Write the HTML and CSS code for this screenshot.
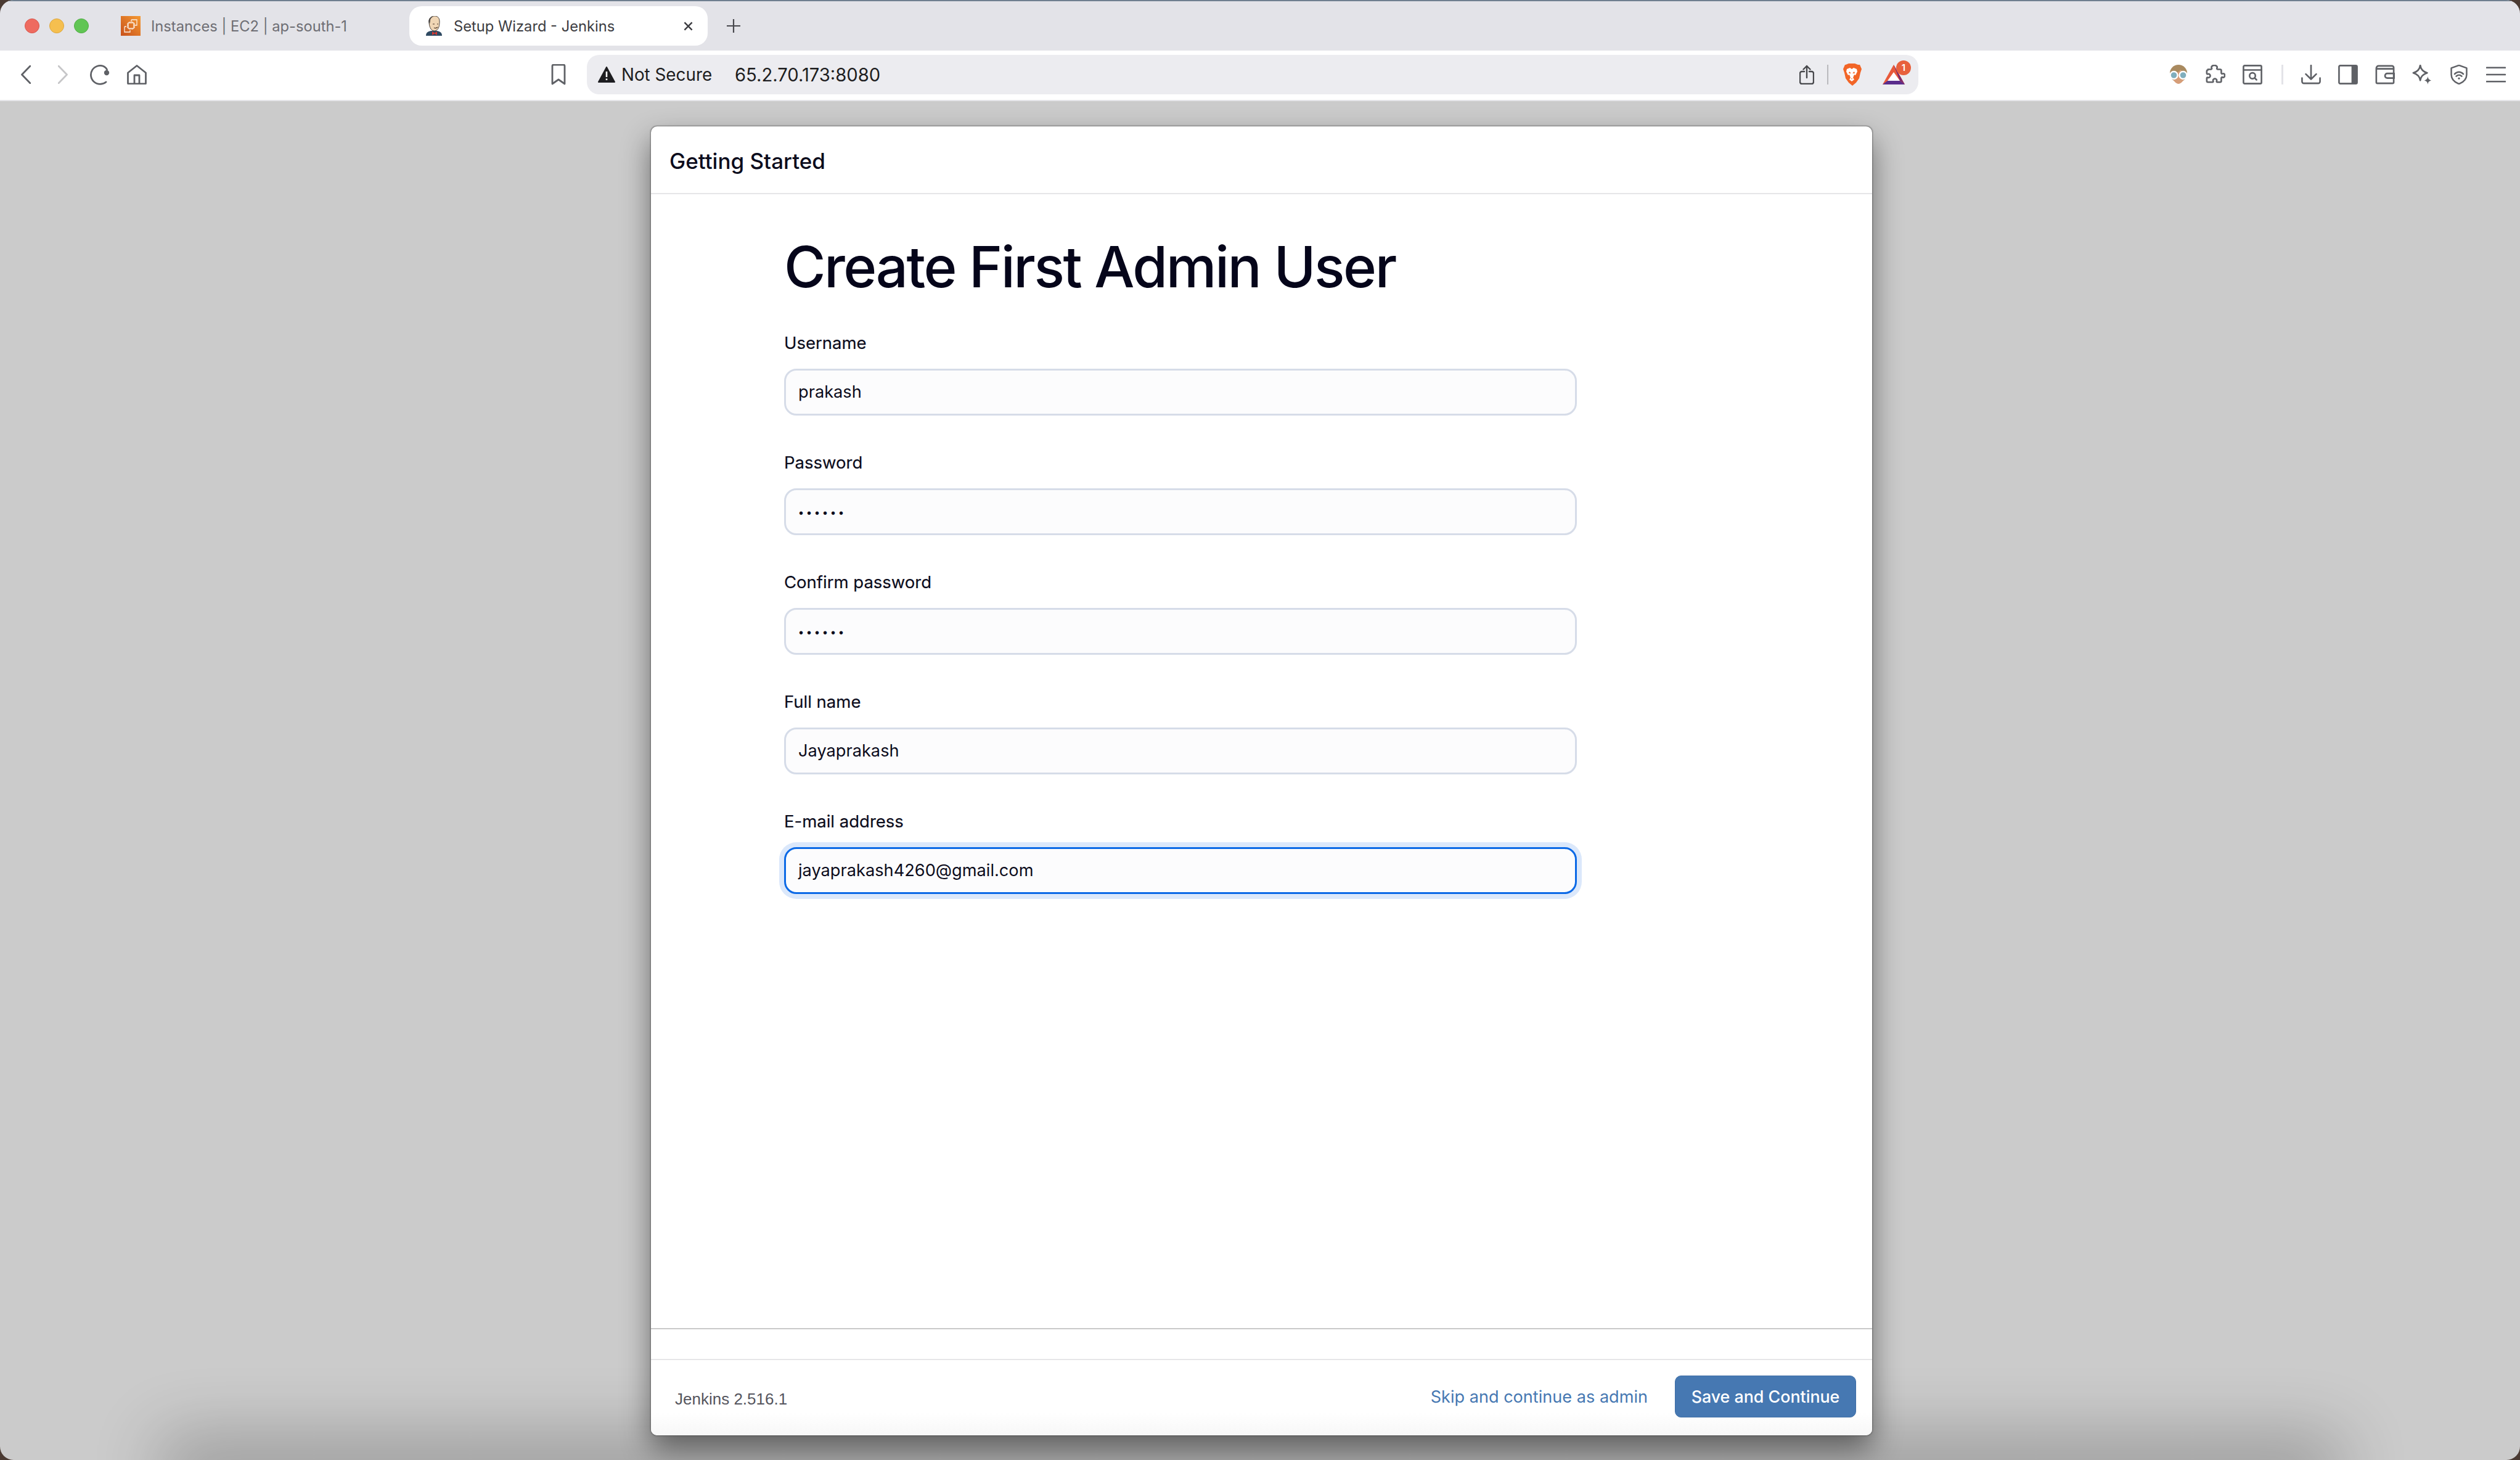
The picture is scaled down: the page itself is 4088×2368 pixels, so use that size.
FILE: index.html
```html
<!DOCTYPE html>
<html lang="en">
<head>
<meta charset="utf-8">
<title>Setup Wizard - Jenkins</title>
<link rel="stylesheet" href="styles.css">
</head>
<body>
<div class="window">
  <header class="tabstrip">
    <div class="lights">
      <span class="light red"></span><span class="light yellow"></span><span class="light green"></span>
    </div>
    <div class="tab">
      <svg class="favicon" viewBox="0 0 32 32">
        <defs><linearGradient id="aws" x1="0" y1="1" x2="1" y2="0"><stop offset="0" stop-color="#c8511b"/><stop offset="1" stop-color="#f59a32"/></linearGradient></defs>
        <rect width="32" height="32" fill="url(#aws)"/>
        <g fill="none" stroke="#fbeee2" stroke-width="1.3">
          <path d="M6 17v9h9v-3M6 17h3M17 6h9v9h-3M17 6v3"/>
          <rect x="12" y="11" width="9" height="9"/>
          <path d="M14 9v2M16.500 9v2M19 9v2M14 20v2M16.500 20v2M19 20v2M10 13h2M10 15.500h2M10 18h2M21 13h2M21 15.500h2M21 18h2"/>
        </g>
      </svg>
      <span class="tab-title">Instances | EC2 | ap-south-1</span>
    </div>
    <div class="tab active">
      <svg class="favicon jenkins" viewBox="0 0 28 32">
        <path d="M1 32c0-5 3-7 8-8h10c5 1 8 3 8 8z" fill="#2f4a62"/>
        <path d="M6 9c0-6 4-9 9-9s8 3 8 9c0 6-1 12-5 14-3 2-7 1-9-2-2-3-3-7-3-12z" fill="#f0d6b5" stroke="#4a3f38" stroke-width="1"/>
        <path d="M6 12C4 6 7 1 13 1c-4 2-5 4-5 7l-1 5z" fill="#4d4a48"/>
        <path d="M12 13h3M19 13h2M14 19c2 1 4 1 6-1" fill="none" stroke="#4a3526" stroke-width="1.200"/>
        <path d="M11 25l4 2.500 4-2.500v6l-4-2.500-4 2.500z" fill="#d33833"/>
      </svg>
      <span class="tab-title">Setup Wizard - Jenkins</span>
      <svg class="close" viewBox="0 0 16 16"><path d="M1.500 1.500l13 13M14.500 1.500l-13 13"/></svg>
    </div>
    <svg class="new-tab" viewBox="0 0 22 22"><path d="M11 0v22M0 11h22"/></svg>
  </header>

  <nav class="toolbar">
    <div class="nav-buttons">
      <svg class="icon back" viewBox="0 0 16 30"><path d="M15 1L1.500 15 15 29"/></svg>
      <svg class="icon forward" viewBox="0 0 16 30"><path d="M1 1l13.500 14L1 29"/></svg>
      <svg class="icon reload" viewBox="0 0 34 34"><path d="M28 29A15 15 0 1 1 24 3.500c2.500 1.200 4.500 3 5.500 5.500"/><circle class="solid" cx="29" cy="14" r="4.200"/></svg>
      <svg class="icon home" viewBox="0 0 32 32"><path d="M1.500 13L16 1.500 30.500 13v17a1 1 0 0 1-1 1h-27a1 1 0 0 1-1-1zM12 31V17h8v14"/></svg>
    </div>
    <svg class="icon bookmark" viewBox="0 0 24 34"><path d="M2 3a2 2 0 0 1 2-2h16a2 2 0 0 1 2 2v29l-10-7-10 7z"/></svg>
    <div class="address">
      <svg class="warn" viewBox="0 0 28 26"><path d="M14 1L1 25h26z" fill="#1d1d20" stroke="#1d1d20" stroke-width="2" stroke-linejoin="round"/><path d="M14 8v9M14 19.500v2.500" stroke="#fff" stroke-width="2.600"/></svg>
      <span class="not-secure">Not Secure</span>
      <span class="url">65.2.70.173:8080</span>
      <svg class="icon share" viewBox="0 0 24 32"><path d="M8 11H4a3 3 0 0 0-3 3v14a3 3 0 0 0 3 3h16a3 3 0 0 0 3-3V14a3 3 0 0 0-3-3h-4M12 21V2M6.500 7.500L12 2l5.500 5.500"/></svg>
      <span class="addr-sep"></span>
      <svg class="lion" viewBox="0 0 32 36">
        <path d="M6 2L11 0h10l5 2 3 0 3 7-2 6-2 9-5 7-6 5-6-5-5-7-2-9-2-6 3-7z" fill="#f26527"/>
        <path d="M8 9l5-2 3 2 3-2 5 2 1 4-3 6-2-1-2 5 2 3-4 3-4-3 2-3-2-5-2 1-3-6z" fill="#fff"/>
        <path d="M12 13l3 3-4 0zM20 13l-3 3 4 0zM15 24h2l-1 2z" fill="#f26527"/>
      </svg>
      <span class="bat">
        <svg viewBox="0 0 36 32"><path d="M18 0l18 32H0z" fill="#e8593a"/><path d="M18 0l18 32-8-6z" fill="#7f2a6a"/><path d="M0 32l8-6h20l8 6z" fill="#5a2d8c"/><path d="M18 12l10 14H8z" fill="#fff"/></svg>
        <span class="badge">1</span>
      </span>
    </div>
    <div class="extensions">
      <svg class="ext" viewBox="0 0 32 32">
        <circle cx="16" cy="14" r="14" fill="#a98a5f"/><path d="M5 17c2 9 7 14 11 14s9-5 11-14c-3-5-6-7-8-9-2 4-8 6-14 9z" fill="#d69d78"/>
        <circle cx="8.500" cy="17" r="6" fill="#80aebd" stroke="#fff" stroke-width="2.400"/><circle cx="23.500" cy="17" r="6" fill="#80aebd" stroke="#fff" stroke-width="2.400"/>
      </svg>
      <svg class="icon ext" viewBox="0 0 34 34"><path d="M4 8h5c1 0 2-1 1.500-2C9 3 12 1 15 1s6 2 4.500 5c-.5 1 .5 2 1.500 2h4a2 2 0 0 1 2 2v4c0 1 1 2 2 1.500 2-1 4 0 4 3s-2 4-4 3c-1-.5-2 .5-2 1.500v5a2 2 0 0 1-2 2h-5c-1 0-1.500-1-1-2 1-2-1-4-3-4s-4 2-3 4c.5 1 0 2-1 2H4a2 2 0 0 1-2-2v-5c0-1 1-1.500 2-1 2 1 4-1 4-3s-2-4-4-3c-1 .5-2 0-2-1v-4a2 2 0 0 1 2-2z"/></svg>
      <svg class="icon ext" viewBox="0 0 34 34"><rect x="1.500" y="1.500" width="31" height="31" rx="2"/><path d="M1.500 9h31M24 26l-3.500-3.500"/><circle cx="17" cy="19" r="5"/></svg>
      <span class="ext-sep"></span>
      <svg class="icon ext" viewBox="0 0 34 34"><path d="M17 1v24M8 16l9 9 9-9M1.500 23v6a3 3 0 0 0 3 3h25a3 3 0 0 0 3-3v-6"/></svg>
      <svg class="icon ext" viewBox="0 0 34 34"><rect x="1.500" y="1.500" width="31" height="31" rx="2"/><path class="solid" d="M23 1.500h7.500a2 2 0 0 1 2 2v27a2 2 0 0 1-2 2H23z"/></svg>
      <svg class="icon ext" viewBox="0 0 34 34"><path d="M32 11V5a3 3 0 0 0-3-3H6a4 4 0 0 0-4 4v24a2 2 0 0 0 2 2h26a2 2 0 0 0 2-2zM2 7h30M33 15H21a4 4 0 0 0-4 4v0a4 4 0 0 0 4 4h12z"/></svg>
      <svg class="icon ext" viewBox="0 0 34 34"><path d="M14 1c1 7 5 11 12 13-7 2-11 6-12 13-1-7-5-11-12-13 7-2 11-6 12-13z"/><path class="solid" d="M27 20c.5 4 2 6 6 7-4 1-5.500 3-6 7-.5-4-2-6-6-7 4-1 5.500-3 6-7z"/></svg>
      <svg class="icon ext" viewBox="0 0 34 36"><path d="M17 1l14 5v12c0 8-6 14-14 17C9 32 3 26 3 18V6zM9 17c5-5 11-5 16 0M12 21c3-3 7-3 10 0"/><circle class="solid" cx="17" cy="25" r="1.800"/></svg>
      <svg class="icon ext" viewBox="0 0 34 34"><path d="M1 5h32M1 17h32M1 29h32"/></svg>
    </div>
  </nav>

  <main class="page">
    <div class="edge-shadow"></div>
    <section class="wizard">
      <h2 class="wizard-title">Getting Started</h2>
      <div class="wizard-body">
        <h1 class="heading">Create First Admin User</h1>
        <div class="field"><div class="label">Username</div><div class="input">prakash</div></div>
        <div class="field"><div class="label">Password</div><div class="input dots">••••••</div></div>
        <div class="field"><div class="label">Confirm password</div><div class="input dots">••••••</div></div>
        <div class="field"><div class="label">Full name</div><div class="input">Jayaprakash</div></div>
        <div class="field"><div class="label">E-mail address</div><div class="input focused">jayaprakash4260@gmail.com</div></div>
      </div>
      <div class="rule"></div>
      <footer class="wizard-footer">
        <span class="version">Jenkins 2.516.1</span>
        <a class="skip">Skip and continue as admin</a>
        <a class="save">Save and Continue</a>
      </footer>
    </section>
  </main>
</div>
</body>
</html>
```

FILE: styles.css
```css
* { box-sizing: border-box; }
html, body { margin: 0; height: 100%; }
body { background: #4a3a32; font-family: Inter, "Liberation Sans", sans-serif; overflow: hidden; }

.window { width: 4088px; height: 2368px; display: flex; flex-direction: column; border-radius: 22px; overflow: hidden; position: relative; }

.tabstrip { height: 82px; background: #e3e3e8; border-top: 2px solid #6f7f8f; display: flex; align-items: flex-start; padding-top: 8px; flex: none; }
.lights { width: 180px; padding: 20px 0 0 40px; display: flex; gap: 16px; flex: none; }
.light { width: 24px; height: 24px; border-radius: 50%; }
.red { background: #ee6b60; border: 1px solid #d9584e; }
.yellow { background: #f5bf4f; border: 1px solid #dda73f; }
.green { background: #61c554; border: 1px solid #52ad46; }

.tab { width: 484px; height: 64px; display: flex; align-items: center; padding-left: 16px; border-radius: 20px; flex: none; font-size: 23.700px; color: #6e6e74; }
.favicon { width: 32px; height: 32px; margin-right: 17px; flex: none; }
.tab.active { background: #fff; color: #3c3c41; padding-left: 26px; }
.jenkins { width: 28px; margin-right: 18px; }
.tab-title { white-space: nowrap; flex: 1; }
.close { width: 15px; height: 15px; margin-right: 24px; fill: none; stroke: #3c3c41; stroke-width: 2.600; flex: none; }
.new-tab { width: 22px; height: 22px; margin: 21px 0 0 31px; fill: none; stroke: #48484d; stroke-width: 2.200; flex: none; }

.toolbar { height: 82px; background: #fff; border-bottom: 2px solid #e6e6ea; display: flex; align-items: center; flex: none; padding-bottom: 2px; position: relative; z-index: 2; }
.icon { fill: none; stroke: #5f6166; stroke-width: 2.800; stroke-linecap: round; stroke-linejoin: round; flex: none; }
.icon .solid { fill: #5f6166; stroke: none; }
.nav-buttons { display: flex; align-items: center; width: 894px; padding-left: 34px; flex: none; }
.back { width: 16px; height: 30px; }
.forward { width: 16px; height: 30px; margin-left: 44px; stroke: #c6c6c8; }
.reload { width: 34px; height: 34px; margin-left: 34px; }
.home { width: 32px; height: 32px; margin-left: 28px; }
.bookmark { width: 24px; height: 34px; }

.address { width: 2160px; height: 64px; margin-left: 34px; background: #ececf0; border-radius: 20px; display: flex; align-items: center; padding-left: 18px; flex: none; font-size: 27.800px; color: #1d1d20; }
.warn { width: 28px; height: 26px; flex: none; }
.not-secure { margin-left: 10px; white-space: nowrap; width: 184px; flex: none; }
.url { white-space: nowrap; width: 1px; flex: 1; font-size: 29.200px; }
.share { width: 24px; height: 32px; stroke: #47484c; stroke-width: 2.400; }
.addr-sep { width: 2px; height: 32px; background: #b9b9bd; margin: 0 22px 0 21px; flex: none; }
.lion { width: 32px; height: 36px; flex: none; }
.bat { width: 36px; height: 32px; margin: 0 22px 0 34px; position: relative; flex: none; }
.bat svg { display: block; width: 36px; height: 32px; }
.badge { position: absolute; left: 22px; top: -7px; width: 24px; height: 24px; border-radius: 50%; background: #e8603c; color: #fff; font-size: 15px; font-weight: 600; line-height: 24px; text-align: center; }

.extensions { margin-left: auto; width: 570px; display: flex; align-items: center; flex: none; }
.ext { width: 32px; height: 32px; margin-right: 28px; flex: none; }
.ext-sep { width: 3px; height: 32px; background: #e3e3e8; margin: 0 29px 0 3px; flex: none; }

.page { flex: 1; background: #cbcbcb; position: relative; padding: 41px 0 0 1056px; overflow: hidden; }
.edge-shadow { position: absolute; left: 300px; right: 330px; bottom: -30px; height: 30px; box-shadow: 0 0 110px 40px rgba(0,0,0,.24); }

.wizard { width: 1981px; height: 2123px; background: #fff; border-radius: 10px; box-shadow: 0 0 2px 1px rgba(70,70,70,.6), 0 22px 48px rgba(0,0,0,.48); display: flex; flex-direction: column; position: relative; }
.wizard-title { margin: 0; height: 110px; flex: none; padding-left: 30px; font-size: 35px; font-weight: 500; line-height: 112px; color: #0c0c1c; border-bottom: 2px solid #e6e6e8; }
.wizard-body { flex: 1; padding: 59px 0 0 216px; }
.heading { margin: 0 0 47px; font-size: 92px; font-weight: 500; line-height: 118px; color: #05051a; letter-spacing: -2.500px; white-space: nowrap; }
.field { width: 1286px; margin-bottom: 59px; }
.label { font-size: 27.500px; font-weight: 400; line-height: 34px; margin-bottom: 25px; color: #0c0c1c; -webkit-text-stroke: 0.2px #0c0c1c; }
.input { height: 76px; border: 3px solid #d6dce8; border-radius: 20px; background: #fcfcfd; padding-left: 20px; font-size: 27.200px; line-height: 70px; color: #0c0c1c; }
.dots { font-family: "Liberation Sans", sans-serif; font-size: 20px; letter-spacing: 6px; padding-left: 21px; padding-top: 2px; }
.focused { border-color: #0b69e6; box-shadow: 0 0 0 8px #dbe8fb; }

.rule { height: 2px; background: #c9c9c9; flex: none; }
.wizard-footer { flex: none; margin-top: 48px; height: 124px; border-top: 2px solid #e6e6e8; display: flex; align-items: center; padding: 0 26px 4px 39px; background: linear-gradient(#fff 70%, #f7f7f7); border-radius: 0 0 10px 10px; }
.version { font-family: "Liberation Sans", sans-serif; font-size: 26px; color: #55555e; margin-right: auto; margin-top: 8px; }
.skip { font-size: 27.100px; color: #4678b2; margin-right: 44px; white-space: nowrap; }
.save { width: 294px; height: 68px; background: #4678b2; border: 1px solid #3f6ea6; border-radius: 10px; color: #fff; font-size: 26.800px; font-weight: 500; line-height: 66px; text-align: center; white-space: nowrap; }
```
